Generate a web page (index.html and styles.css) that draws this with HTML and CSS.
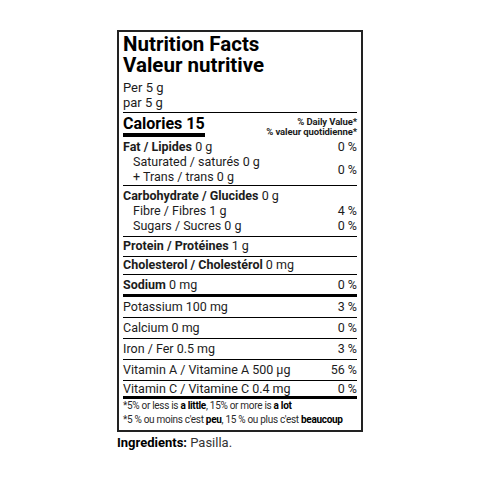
FILE: index.html
```html
<!DOCTYPE html>
<html lang="en">
<head>
  <meta charset="UTF-8" />
  <meta name="viewport" content="width=device-width, initial-scale=1.0"/>
  <title>Nutrition Facts - Pasilla</title>
  <link rel="stylesheet" href="styles.css">
</head>
<body>

  <div class="wrap">
    <div class="label">
      <div class="head">
        <h1>Nutrition Facts<br>Valeur nutritive</h1>
        <p class="serving">Per 5 g<br>par 5 g</p>
      </div>

      <div class="calories">
        <span class="cal">Calories 15</span>
        <span class="dv">% Daily Value*<br>% valeur quotidienne*</span>
      </div>

      <!-- fat -->
      <div class="group fat">
        <div class="row"><span><b>Fat / Lipides</b> 0 g</span><span>0 %</span></div>
        <div class="pair">
          <div>
            <div class="sub">Saturated / saturés 0 g</div>
            <div class="sub">+ Trans / trans 0 g</div>
          </div>
          <span>0 %</span>
        </div>
      </div>

      <!-- carbs -->
      <div class="group carbs">
        <div class="row"><span><b>Carbohydrate / Glucides</b> 0 g</span></div>
        <div class="row sub"><span>Fibre / Fibres 1 g</span><span>4 %</span></div>
        <div class="row sub"><span>Sugars / Sucres 0 g</span><span>0 %</span></div>
      </div>

      <div class="line protein"><span><b>Protein / Protéines</b> 1 g</span></div>
      <div class="line chol"><span><b>Cholesterol / Cholestérol</b> 0 mg</span></div>
      <div class="line sodium thick"><span><b>Sodium</b> 0 mg</span><span>0 %</span></div>

      <div class="mineral"><span>Potassium 100 mg</span><span>3 %</span></div>
      <div class="mineral"><span>Calcium 0 mg</span><span>0 %</span></div>
      <div class="mineral"><span>Iron / Fer 0.5 mg</span><span>3 %</span></div>
      <div class="mineral"><span>Vitamin A / Vitamine A 500 µg</span><span>56 %</span></div>
      <div class="mineral last thick"><span>Vitamin C / Vitamine C 0.4 mg</span><span>0 %</span></div>

      <div class="notes">
        <p>*5% or less is <b>a little</b>, 15% or more is <b>a lot</b></p>
        <p>*5 % ou moins c'est <b>peu</b>, 15 % ou plus c'est <b>beaucoup</b></p>
      </div>
    </div>

    <p class="ingredients"><b>Ingredients:</b> Pasilla.</p>
  </div>

</body>
</html>
```

FILE: styles.css
```css
body {
  margin: 0;
  font-family: Roboto, "Liberation Sans", sans-serif;
  color: #1c1c1c;
  background: #fff;
}

.wrap {
  width: 246px;
  margin: 30px auto 0;
}

.label {
  border: 2px solid #222;
  padding: 2px 4px 3px 4px;
}

h1 {
  margin: 0;
  font-size: 20.5px;
  line-height: 21px;
  font-weight: 700;
  color: #000;
}

.serving {
  margin: 4px 0 0;
  font-size: 13px;
  line-height: 15px;
}

.head {
  padding-bottom: 2px;
  border-bottom: 1px solid #000;
}

.calories {
  display: flex;
  justify-content: space-between;
  align-items: flex-end;
  padding-top: 1px;
}

.cal {
  font-size: 16px;
  line-height: 19px;
  font-weight: 700;
  color: #000;
  border-bottom: 4px solid #000;
}

.dv {
  font-size: 9.5px;
  line-height: 10px;
  font-weight: 700;
  text-align: right;
  letter-spacing: -0.1px;
}

.group {
  font-size: 12.5px;
  line-height: 15px;
  padding: 2px 0 1px;
  border-bottom: 1px solid #000;
}

.carbs {
  padding-bottom: 3px;
}

.row, .pair, .line, .mineral {
  display: flex;
  justify-content: space-between;
}

.pair {
  align-items: center;
}

.sub {
  padding-left: 10px;
}

.line {
  font-size: 12.5px;
  line-height: 15px;
  border-bottom: 1px solid #000;
}

.protein {
  padding: 1px 0 3px;
}

.chol {
  padding: 0 0 2px;
}

.sodium {
  padding: 2px 0 2px;
}

.mineral {
  font-size: 12.5px;
  line-height: 20px;
  border-bottom: 1px solid #000;
}

.mineral.last {
  line-height: 15px;
  padding-top: 0;
}

.thick {
  border-bottom: 3px solid #000;
}

.notes {
  font-size: 10px;
  line-height: 14px;
  letter-spacing: -0.3px;
  color: #2a2a2a;
}

.notes p {
  margin: 0;
}

.notes b {
  color: #000;
}

.ingredients {
  margin: 3px 0 0 0;
  font-size: 13px;
  color: #333;
}

.ingredients b {
  color: #000;
}
```
